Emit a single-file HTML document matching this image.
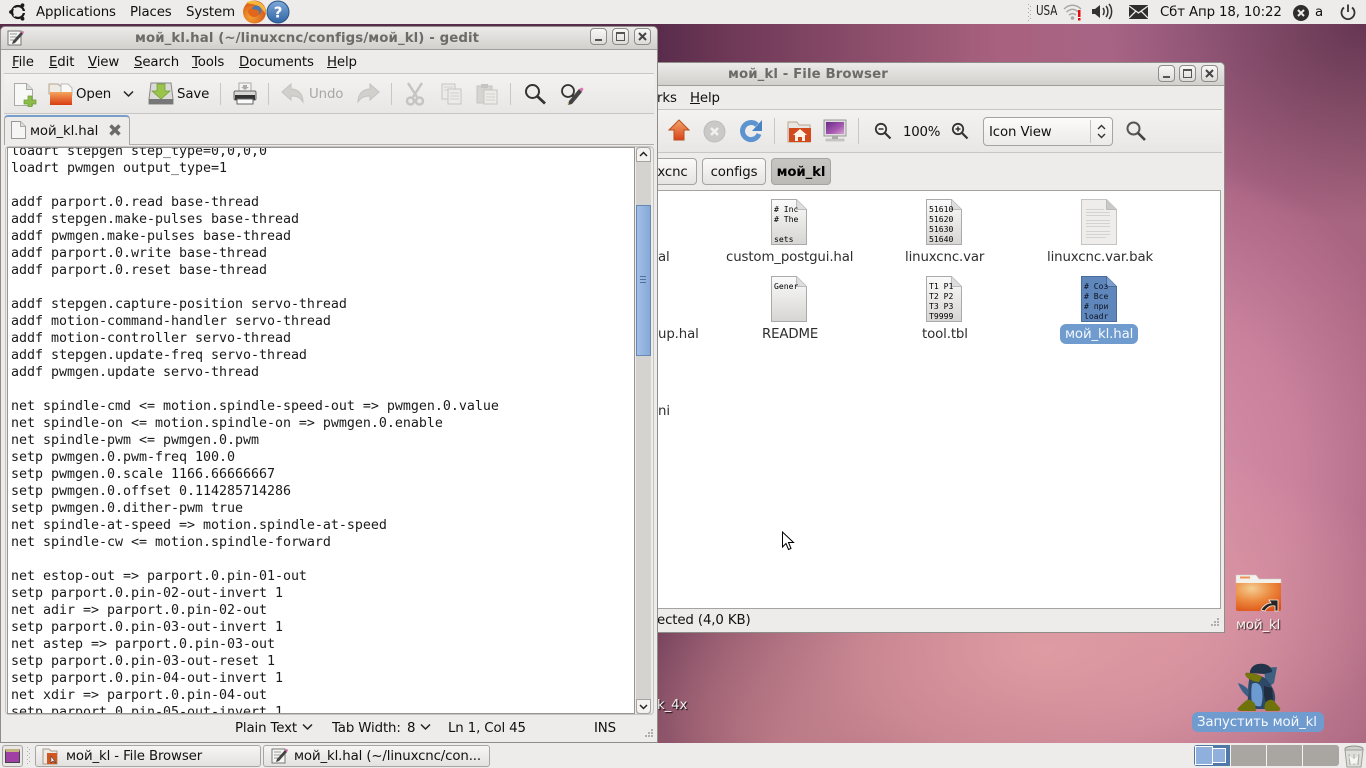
<!DOCTYPE html>
<html><head><meta charset="utf-8"><title>gedit</title>
<style>
html,body{margin:0;padding:0;width:1366px;height:768px;overflow:hidden}
body{position:relative;font-family:"DejaVu Sans","Liberation Sans","Noto Sans CJK SC",sans-serif;font-size:13.33px;letter-spacing:-.13px;color:#101010;
background:
radial-gradient(ellipse 260px 200px at 1366px 24px,#653652 0,rgba(101,54,82,0) 100%),
radial-gradient(ellipse 400px 230px at 1040px 650px,rgba(227,160,164,.9) 0,rgba(227,160,164,.6) 45%,rgba(227,160,164,0) 100%),
radial-gradient(ellipse 340px 200px at 790px 750px,rgba(176,112,126,.95) 0,rgba(176,112,126,0) 100%),
radial-gradient(ellipse 370px 450px at 1170px 470px,#d68fa9 0,#c9819c 35%,rgba(170,100,130,.7) 70%,rgba(150,85,115,0) 100%),
linear-gradient(90deg,#5a2c4c 660px,#6c3755 720px,#a8627f 1000px,#a8668a 1200px,#a5667d 1366px);}
.a{position:absolute}
.t{position:absolute;white-space:nowrap;line-height:16px}
u{text-decoration:underline}
.win{position:absolute;background:#edecea;border:1px solid #8f8d89;box-sizing:border-box;border-radius:5px 5px 0 0}
.title{position:absolute;background:linear-gradient(#ecebe9,#d2d0cd);border-bottom:1px solid #a09e9a;border-radius:4px 4px 0 0}
.ttxt{position:absolute;font-weight:bold;color:#6d6a67;white-space:nowrap;line-height:16px;letter-spacing:.09px}
.wb{position:absolute;width:17px;height:17px;box-sizing:border-box;border:1px solid #8e8c88;border-radius:4px;background:linear-gradient(#f8f8f7,#dddbd8)}
.sep{position:absolute;width:1px;background:#c9c7c3}
.hl{position:absolute;height:1px;background:#c8c6c2}
pre{position:absolute;margin:0;font-family:"DejaVu Sans Mono","Liberation Mono",monospace;font-size:13.33px;line-height:17px;letter-spacing:-.026px;color:#1a1a1a}
.icotxt{position:absolute;font-family:"DejaVu Sans Mono","Liberation Mono",monospace;font-size:8.1px;letter-spacing:0;line-height:10px;color:#000;white-space:pre}
.file{position:absolute;width:36px;height:46px}
.lbl{position:absolute;white-space:nowrap;line-height:16px;text-align:center;color:#2e2e2e;font-size:13.33px}
.crumb{position:absolute;box-sizing:border-box;height:27px;border:1px solid #a6a4a0;border-radius:4px;background:linear-gradient(#fafaf9,#e6e4e2);line-height:27px;text-align:center}
.tb{position:absolute;box-sizing:border-box;height:22px;border:1px solid #a8a6a2;border-radius:3px;background:linear-gradient(#f7f6f5,#e4e2df);line-height:21px;white-space:nowrap;overflow:hidden}
</style></head><body>

<!-- TOP PANEL -->
<div class="a" style="left:0;top:0;width:1366px;height:24px;background:#edecea"></div>
<svg class="a" style="left:8px;top:2px" width="20" height="20" viewBox="0 0 20 20"><circle cx="10" cy="10" r="6" fill="none" stroke="#1a1a1a" stroke-width="2.200"/><circle cx="3" cy="10" r="1.900" fill="#1a1a1a"/><circle cx="14.500" cy="3.300" r="1.900" fill="#1a1a1a"/><circle cx="14.500" cy="16.700" r="1.900" fill="#1a1a1a"/><path d="M6 6l2 3M6 14.500l2-3M13 10h4" stroke="#edecea" stroke-width="2"/></svg>
<div class="t" style="left:36px;top:5px">Applications</div>
<div class="t" style="left:130px;top:5px">Places</div>
<div class="t" style="left:186px;top:5px">System</div>
<svg class="a" style="left:242px;top:0" width="25" height="24" viewBox="0 0 25 24"><defs><radialGradient id="ffx" cx=".35" cy=".7" r=".8"><stop offset="0" stop-color="#f4a030"/><stop offset="1" stop-color="#cf4a14"/></radialGradient></defs><circle cx="12.500" cy="12" r="11.500" fill="url(#ffx)"/><path d="M4 3c5-4 15-3 19 5l1 6-6-7c-4-3-10-3-14-4z" fill="#f7b73c"/><circle cx="14.500" cy="10.500" r="5" fill="#4a77b0"/><path d="M9 8c2 2 6 1 8 3 1 3-1 6-5 6-3 0-5-2-6-5 0-2 1-3 3-4z" fill="#e0661c"/></svg>
<svg class="a" style="left:266px;top:0" width="24" height="24" viewBox="0 0 24 24"><defs><linearGradient id="hg" x1="0" y1="0" x2="0" y2="1"><stop offset="0" stop-color="#7fa9d8"/><stop offset="1" stop-color="#2f64a5"/></linearGradient></defs><circle cx="12" cy="12" r="11" fill="url(#hg)" stroke="#295487"/><text x="12" y="17.500" text-anchor="middle" font-family="DejaVu Sans" font-weight="bold" font-size="15" fill="#fff">?</text></svg>

<svg class="a" style="left:1028px;top:4px" width="4" height="17"><g fill="#aaa"><rect x="0" y="0" width="1" height="1"/><rect x="2" y="2" width="1" height="1"/><rect x="0" y="4" width="1" height="1"/><rect x="2" y="6" width="1" height="1"/><rect x="0" y="8" width="1" height="1"/><rect x="2" y="10" width="1" height="1"/><rect x="0" y="12" width="1" height="1"/><rect x="2" y="14" width="1" height="1"/><rect x="0" y="16" width="1" height="1"/></g></svg>
<div class="t" style="left:1036px;top:4px;font-size:13.33px;transform:scaleX(.78);transform-origin:0 0;color:#222">USA</div>
<svg class="a" style="left:1063px;top:3px" width="20" height="18" viewBox="0 0 20 18"><g fill="none" stroke="#a9a7a3" stroke-width="1.500"><path d="M1 6c5-5 12-5 17 0"/><path d="M3.500 9c4-3.500 8-3.500 12 0"/><path d="M6 12c2.500-2 4.500-2 7 0"/></g><circle cx="9.500" cy="15" r="1.800" fill="#a9a7a3"/><rect x="15" y="7" width="2.500" height="7" fill="#e01010"/><rect x="15" y="15" width="2.500" height="2.500" fill="#e01010"/></svg>
<svg class="a" style="left:1091px;top:2px" width="22" height="19" viewBox="0 0 22 19"><path d="M1 7h3l5-4v13l-5-4H1z" fill="#333"/><g fill="none" stroke="#333" stroke-width="1.500"><path d="M12 6c1.500 2 1.500 5 0 7"/><path d="M15 4c2.500 3 2.500 8 0 11"/><path d="M18 2c3.500 4 3.500 11 0 15"/></g></svg>
<svg class="a" style="left:1129px;top:5px" width="19" height="14" viewBox="0 0 19 14"><rect width="19" height="14" fill="#2e2e2e"/><path d="M0 1l9.500 7L19 1M0 13l7-7M19 13l-7-7" fill="none" stroke="#edecea" stroke-width="1.300"/></svg>
<div class="t" style="left:1160px;top:5px">Сбт Апр 18, 10:22</div>
<svg class="a" style="left:1292px;top:4px" width="18" height="18" viewBox="0 0 18 18"><circle cx="9" cy="9" r="8" fill="#2e2e2e"/><path d="M6 6l6 6M12 6l-6 6" stroke="#edecea" stroke-width="2"/></svg>
<div class="t" style="left:1315px;top:5px">а</div>
<svg class="a" style="left:1339px;top:3px" width="18" height="18" viewBox="0 0 18 18"><path d="M5 4.500a6.500 6.500 0 1 0 8 0" fill="none" stroke="#333" stroke-width="1.800"/><path d="M9 1.500v7.500" stroke="#333" stroke-width="1.800"/></svg>

<!-- FILE BROWSER WINDOW -->
<div class="win" style="left:600px;top:62px;width:625px;height:571px"></div>
<div class="title" style="left:601px;top:63px;width:623px;height:22px"></div>
<div class="ttxt" style="left:728px;top:67px">мой_kl - File Browser</div>
<div class="wb" style="left:1158px;top:65px"><div class="a" style="left:4px;top:10px;width:7px;height:2px;background:#555"></div></div>
<div class="wb" style="left:1179px;top:65px"><div class="a" style="left:3px;top:3px;width:7px;height:6px;border:1px solid #555;border-top-width:2px"></div></div>
<div class="wb" style="left:1201px;top:65px"><svg class="a" style="left:2px;top:2px" width="11" height="11"><path d="M2 2l7 7M9 2l-7 7" stroke="#444" stroke-width="2"/></svg></div>
<div class="t" style="left:657px;top:91px">rks</div>
<div class="t" style="left:690px;top:91px"><u>H</u>elp</div>
<div class="hl" style="left:601px;top:109px;width:621px"></div>
<div class="a" style="left:601px;top:110px;width:621px;height:42px;background:linear-gradient(#f3f2f1,#e9e7e5)"></div>
<div class="hl" style="left:601px;top:152px;width:621px"></div>
<svg class="a" style="left:668px;top:119px" width="22" height="22" viewBox="0 0 22 22"><defs><linearGradient id="up" x1="0" y1="0" x2="0" y2="1"><stop offset="0" stop-color="#f5a66a"/><stop offset="1" stop-color="#d8431a"/></linearGradient></defs><path d="M11 1l10 10h-5v10H6V11H1z" fill="url(#up)" stroke="#b5501f"/></svg>
<svg class="a" style="left:703px;top:120px" width="23" height="23" viewBox="0 0 23 23"><circle cx="11.500" cy="11.500" r="10.500" fill="#cbc9c6" stroke="#bbb"/><path d="M8 8l7 7M15 8l-7 7" stroke="#f2f1f0" stroke-width="2.500"/></svg>
<svg class="a" style="left:740px;top:119px" width="24" height="24" viewBox="0 0 24 24"><path d="M19 15a8.500 8.500 0 1 1-2-9" fill="none" stroke="#5d93cf" stroke-width="5"/><path d="M22 1v11H12z" fill="#4b84c4"/></svg>
<div class="sep" style="left:774px;top:118px;height:26px"></div>
<svg class="a" style="left:787px;top:120px" width="25" height="23" viewBox="0 0 25 23"><path d="M1 2h9l2 3h11v17H1z" fill="#e8e6e2" stroke="#b9a48f"/><path d="M2 8h22v14H2z" fill="#d2491c"/><path d="M13 9l7 6h-2v6h-3v-4h-4v4H8v-6H6z" fill="#fff3e8"/></svg>
<svg class="a" style="left:823px;top:119px" width="24" height="24" viewBox="0 0 24 24"><defs><linearGradient id="scr" x1="0" y1="0" x2="1" y2="1"><stop offset="0" stop-color="#6a2a86"/><stop offset=".6" stop-color="#a65ab0"/><stop offset="1" stop-color="#d8a0d0"/></linearGradient></defs><rect x="1" y="1" width="22" height="16" fill="#ddd" stroke="#999"/><rect x="3" y="3" width="18" height="12" fill="url(#scr)"/><rect x="9" y="17" width="6" height="3" fill="#aaa"/><rect x="3" y="20" width="18" height="2" fill="#cfcdc9" stroke="#aaa" stroke-width=".5"/></svg>
<div class="sep" style="left:858px;top:118px;height:26px"></div>
<svg class="a" style="left:874px;top:122px" width="18" height="18" viewBox="0 0 18 18"><circle cx="7" cy="7" r="5.200" fill="#f2f1f0" stroke="#333" stroke-width="1.800"/><path d="M11 11l5.500 5.500" stroke="#333" stroke-width="2.200"/><path d="M4.500 7h5" stroke="#333" stroke-width="1.500"/></svg>
<div class="t" style="left:903px;top:125px;letter-spacing:-.25px">100%</div>
<svg class="a" style="left:951px;top:122px" width="18" height="18" viewBox="0 0 18 18"><circle cx="7" cy="7" r="5.200" fill="#f2f1f0" stroke="#333" stroke-width="1.800"/><path d="M11 11l5.500 5.500" stroke="#333" stroke-width="2.200"/><path d="M4.500 7h5M7 4.500v5" stroke="#333" stroke-width="1.500"/></svg>
<div class="a" style="left:983px;top:117px;width:130px;height:29px;box-sizing:border-box;border:1px solid #a6a4a0;border-radius:4px;background:linear-gradient(#fbfbfa,#eceae8)"></div>
<div class="t" style="left:989px;top:125px">Icon View</div>
<div class="a" style="left:1090px;top:120px;width:1px;height:23px;background:#c4c2be"></div>
<svg class="a" style="left:1096px;top:124px" width="11" height="15" viewBox="0 0 11 15"><path d="M2 5l3.500-3.500L9 5M2 10l3.500 3.500L9 10" fill="none" stroke="#333" stroke-width="1.400"/></svg>
<svg class="a" style="left:1125px;top:120px" width="22" height="22" viewBox="0 0 22 22"><circle cx="8.500" cy="8.500" r="6" fill="none" stroke="#555" stroke-width="2"/><path d="M13 13l7 7" stroke="#444" stroke-width="2.600"/></svg>

<div class="crumb" style="left:620px;top:158px;width:77px;padding-left:28px">xcnc</div>
<div class="crumb" style="left:702px;top:158px;width:64px">configs</div>
<div class="crumb" style="left:771px;top:158px;width:60px;background:linear-gradient(#c8c6c3,#bcbab6);font-weight:bold;color:#000">мой_kl</div>

<div class="a" style="left:610px;top:190px;width:611px;height:419px;background:#fff;border:1px solid #a5a3a0;box-sizing:border-box"></div>

<!-- file icons -->
<svg width="0" height="0" style="position:absolute"><defs><linearGradient id="pg" x1="0" y1="0" x2="0" y2="1"><stop offset="0" stop-color="#fbfbfb"/><stop offset="1" stop-color="#d6d5d3"/></linearGradient></defs></svg>
<svg class="file" style="left:771px;top:199px" viewBox="0 0 36 46"><path d="M.5.500h25l10 10v35H.500z" fill="url(#pg)" stroke="#aaa"/><path d="M25.500.500v10h10" fill="#ddd" stroke="#bbb"/></svg>
<div class="icotxt" style="left:774px;top:204px"># Inc
# The

sets</div>
<svg class="file" style="left:926px;top:199px" viewBox="0 0 36 46"><path d="M.5.500h25l10 10v35H.500z" fill="url(#pg)" stroke="#aaa"/><path d="M25.500.500v10h10" fill="#ddd" stroke="#bbb"/></svg>
<div class="icotxt" style="left:929px;top:204px">51610
51620
51630
51640</div>
<svg class="file" style="left:1081px;top:199px" viewBox="0 0 36 46"><path d="M.5.500h25l10 10v35H.500z" fill="#eeedec" stroke="#c4c4c2"/><path d="M25.500.500v10h10" fill="#c8c8c6" stroke="#bbb"/><g stroke="#d2d2d0"><path d="M5 10.500h18M5 13.500h24M5 16.500h24M5 21.500h24M5 24.500h24M5 27.500h24M5 32.500h24M5 35.500h24M5 38.500h20"/></g></svg>
<svg class="file" style="left:771px;top:276px" viewBox="0 0 36 46"><path d="M.5.500h25l10 10v35H.500z" fill="url(#pg)" stroke="#aaa"/><path d="M25.500.500v10h10" fill="#ddd" stroke="#bbb"/></svg>
<div class="icotxt" style="left:774px;top:281px">Gener</div>
<svg class="file" style="left:926px;top:276px" viewBox="0 0 36 46"><path d="M.5.500h25l10 10v35H.500z" fill="url(#pg)" stroke="#aaa"/><path d="M25.500.500v10h10" fill="#ddd" stroke="#bbb"/></svg>
<div class="icotxt" style="left:929px;top:281px">T1 P1
T2 P2
T3 P3
T9999</div>
<svg class="file" style="left:1081px;top:276px" viewBox="0 0 36 46"><path d="M.5.500h25l10 10v35H.500z" fill="#5f87bc" stroke="#4a6c9a"/><path d="M25.500.500v10h10" fill="#7a9dcb" stroke="#4a6c9a"/></svg>
<div class="icotxt" style="left:1084px;top:281px;color:#0c1420"># Соз
# Все
# при
loadr</div>
<div class="lbl" style="left:658px;top:250px">al</div>
<div class="lbl" style="left:726px;top:250px">custom_postgui.hal</div>
<div class="lbl" style="left:905px;top:250px">linuxcnc.var</div>
<div class="lbl" style="left:1047px;top:250px">linuxcnc.var.bak</div>
<div class="lbl" style="left:658px;top:327px">up.hal</div>
<div class="lbl" style="left:762px;top:327px">README</div>
<div class="lbl" style="left:922px;top:327px">tool.tbl</div>
<div class="a" style="left:1060px;top:324px;width:78px;height:20px;background:#6f9bcf;border-radius:6px"></div>
<div class="lbl" style="left:1065px;top:327px;color:#f4f8fc">мой_kl.hal</div>
<div class="lbl" style="left:658px;top:404px">ni</div>
<div class="t" style="left:657px;top:613px">ected (4,0 KB)</div>
<svg class="a" style="left:1208px;top:617px" width="12" height="12"><g fill="#b0aeaa"><rect x="9" y="1" width="2" height="2"/><rect x="6" y="4" width="2" height="2"/><rect x="9" y="4" width="2" height="2"/><rect x="3" y="7" width="2" height="2"/><rect x="6" y="7" width="2" height="2"/><rect x="9" y="7" width="2" height="2"/></g></svg>
<!-- cursor -->
<svg class="a" style="left:781px;top:531px" width="14" height="21" viewBox="0 0 14 21"><path d="M1.500 1v15l3.500-3.500 2.500 6 2.500-1-2.500-6h5z" fill="#fff" stroke="#000"/></svg>

<!-- desktop -->
<div class="t" style="left:657px;top:698px;color:#f5eef0;text-shadow:1px 1px 1px #000">k_4x</div>
<svg class="a" style="left:1235px;top:574px" width="47" height="40" viewBox="0 0 47 40"><defs><radialGradient id="fo" cx=".35" cy=".2" r=".9"><stop offset="0" stop-color="#f4cd92"/><stop offset=".5" stop-color="#ec8a3e"/><stop offset="1" stop-color="#dc4f16"/></radialGradient></defs><path d="M1 1h20l3 4h22v6H1z" fill="#f3f1ec" stroke="#ccc" stroke-width=".5"/><path d="M1 9h45v26a2 2 0 0 1-2 2H3a2 2 0 0 1-2-2z" fill="url(#fo)"/><rect x="5" y="2.500" width="10" height="2" fill="#f0905a"/><path d="M26 36c2-4 6-7 10-7l-2-3h9v11h-3v-5c-4-1-8 1-10 5z" fill="#2a2422" stroke="#f6f2ee" stroke-width=".8"/></svg>
<div class="t" style="left:1236px;top:618px;color:#fdf5f0;text-shadow:1px 1px 1px #2a1a20">мой_kl</div>
<svg class="a" style="left:1235px;top:662px" width="48" height="50" viewBox="0 0 48 50"><path d="M29 6l13-1-3 16-8 6z" fill="#3d5f80"/><path d="M15 9c2-6 7-8 14-7 5 1 8 4 8 8l-8 2-14-1z" fill="#22344a"/><path d="M15 14c5-1 12-1 16 3 6 6 10 14 9 21 0 5-5 9-12 9H18c-5-1-6-6-5-12 0-7 0-14 2-21z" fill="#2e4868"/><path d="M17 22c3-2 7-1 9 3 2 5 2 13 0 19-2 1-7 0-9-3-1-6-1-13 0-19z" fill="#6b9bd0"/><path d="M29 24l8 2 1 12-6 6-3-10z" fill="#1f2d3f"/><path d="M3 21c4 1 8 4 11 7l-1 7c-4-3-8-8-10-14z" fill="#3c5f87"/><path d="M11 11c5 0 11 1 16 4l-3 5c-5 0-9-2-12-5-1-1-2-3-1-4z" fill="#76780c" stroke="#5a5b0a" stroke-width=".5"/><path d="M12 38c3-1 6 1 8 4l1 7H5c-3-1-3-2-2-3 3-3 6-6 9-8zM31 40c3-3 6-3 8-1l6 7c1 2-1 3-3 3H31c-2-2-2-6 0-9z" fill="#70720c"/></svg>
<div class="a" style="left:1192px;top:712px;width:132px;height:20px;background:#6f9bcf;border-radius:6px"></div>
<div class="t" style="left:1197px;top:715px;color:#f4f8fc">Запустить мой_kl</div>

<!-- GEDIT WINDOW -->
<div class="win" style="left:0;top:26px;width:658px;height:717px"></div>
<div class="title" style="left:1px;top:27px;width:656px;height:22px"></div>
<svg class="a" style="left:7px;top:30px" width="17" height="16" viewBox="0 0 17 16"><rect x="1" y="1" width="13" height="14" fill="#f5f5f3" stroke="#777"/><path d="M3 4h7M3 7h7M3 10h5" stroke="#999"/><path d="M6 11L14 2l2 2-8 9-3 1z" fill="#444"/><path d="M14 2l2 2 1-2-1-1z" fill="#e060a0"/></svg>
<div class="ttxt" style="left:135px;top:31px">мой_kl.hal (~/linuxcnc/configs/мой_kl) - gedit</div>
<div class="wb" style="left:590px;top:28px"><div class="a" style="left:4px;top:10px;width:7px;height:2px;background:#555"></div></div>
<div class="wb" style="left:612px;top:28px"><div class="a" style="left:3px;top:3px;width:7px;height:6px;border:1px solid #555;border-top-width:2px"></div></div>
<div class="wb" style="left:634px;top:28px"><svg class="a" style="left:2px;top:2px" width="11" height="11"><path d="M2 2l7 7M9 2l-7 7" stroke="#444" stroke-width="2"/></svg></div>
<div class="t" style="left:12px;top:55px"><u>F</u>ile</div>
<div class="t" style="left:49px;top:55px"><u>E</u>dit</div>
<div class="t" style="left:88px;top:55px"><u>V</u>iew</div>
<div class="t" style="left:134px;top:55px"><u>S</u>earch</div>
<div class="t" style="left:192px;top:55px"><u>T</u>ools</div>
<div class="t" style="left:239px;top:55px"><u>D</u>ocuments</div>
<div class="t" style="left:327px;top:55px"><u>H</u>elp</div>
<div class="hl" style="left:4px;top:73px;width:650px"></div>
<div class="a" style="left:4px;top:74px;width:650px;height:39px;background:linear-gradient(#f3f2f1,#e9e7e5)"></div>
<div class="hl" style="left:4px;top:113px;width:650px"></div>
<svg class="a" style="left:13px;top:82px" width="24" height="25" viewBox="0 0 24 25"><path d="M1.500 1.500h12l6 6v16h-18z" fill="#f8f8f6" stroke="#aaa"/><path d="M13.500 1.500v6h6" fill="#ddd" stroke="#aaa"/><path d="M15 14h4v4h4v4h-4v3h-4v-3h-4v-4h4z" fill="#8cbd4a" stroke="#6d9a35" stroke-width=".7"/></svg>
<svg class="a" style="left:48px;top:83px" width="25" height="23" viewBox="0 0 25 23"><defs><linearGradient id="of" x1="0" y1="0" x2="0" y2="1"><stop offset="0" stop-color="#f4a45e"/><stop offset="1" stop-color="#d93a10"/></linearGradient></defs><path d="M1 1h9l2 2h8v8H1z" fill="#eeeae4" stroke="#b9a48f"/><path d="M13 1h7l4 4v7H13z" fill="#f8f8f6" stroke="#bbb"/><rect x="2" y="9" width="22" height="13" fill="url(#of)"/></svg>
<div class="t" style="left:76px;top:87px">Open</div>
<svg class="a" style="left:123px;top:90px" width="11" height="8"><path d="M1 1.500l4.500 4.500L10 1.500" fill="none" stroke="#222" stroke-width="1.500"/></svg>
<svg class="a" style="left:148px;top:81px" width="26" height="25" viewBox="0 0 26 25"><path d="M3 2h20l2 16v5H1v-5z" fill="#dcdbd8" stroke="#888"/><rect x="1" y="18" width="24" height="5" fill="#777"/><path d="M9 3h8v7h5l-9 8-9-8h5z" fill="#9ac54a" stroke="#6d9a35" stroke-width=".7"/></svg>
<div class="t" style="left:177px;top:87px">Save</div>
<div class="sep" style="left:220px;top:83px;height:22px"></div>
<svg class="a" style="left:233px;top:82px" width="24" height="24" viewBox="0 0 24 24"><rect x="6" y="1" width="12" height="9" fill="#f2f2f0" stroke="#aaa"/><path d="M10 3h4v2h2l-4 3-4-3h2z" fill="#aaa"/><rect x="1" y="9" width="22" height="9" rx="1.500" fill="#d8d7d4" stroke="#666"/><rect x="2" y="13" width="20" height="5" fill="#333"/><rect x="4" y="17" width="16" height="5" fill="#fafafa" stroke="#666"/></svg>
<div class="sep" style="left:268px;top:83px;height:22px"></div>
<svg class="a" style="left:281px;top:83px" width="23" height="22" viewBox="0 0 23 22"><path d="M1 9l9-8v5c7 0 12 5 12 13-3-5-7-6-12-6v4z" fill="#d2d0cd" stroke="#c4c2bf"/></svg>
<div class="t" style="left:309px;top:87px;color:#a9a7a4">Undo</div>
<svg class="a" style="left:357px;top:83px" width="23" height="22" viewBox="0 0 23 22"><path d="M22 9l-9-8v5C6 6 1 11 1 19c3-5 7-6 12-6v4z" fill="#d2d0cd" stroke="#c4c2bf"/></svg>
<div class="sep" style="left:391px;top:83px;height:22px"></div>
<svg class="a" style="left:405px;top:82px" width="20" height="24" viewBox="0 0 20 24"><path d="M3 1l9 14M17 1L8 15" stroke="#c6c4c1" stroke-width="2.500"/><circle cx="5.500" cy="19" r="3.500" fill="none" stroke="#c6c4c1" stroke-width="2.500"/><circle cx="14.500" cy="19" r="3.500" fill="none" stroke="#c6c4c1" stroke-width="2.500"/></svg>
<svg class="a" style="left:441px;top:83px" width="21" height="22" viewBox="0 0 21 22"><rect x="1" y="1" width="13" height="15" fill="#ecebe9" stroke="#c6c4c1"/><path d="M3 4h9M3 7h9" stroke="#d2d0cd"/><rect x="7" y="6" width="13" height="15" fill="#ecebe9" stroke="#c6c4c1"/><path d="M9 10h9M9 13h9M9 16h9" stroke="#d2d0cd"/></svg>
<svg class="a" style="left:476px;top:83px" width="22" height="22" viewBox="0 0 22 22"><rect x="1" y="3" width="15" height="17" fill="#d6d4d1" stroke="#c6c4c1"/><rect x="5" y="1" width="7" height="4" fill="#c6c4c1"/><rect x="8" y="7" width="13" height="14" fill="#ecebe9" stroke="#c6c4c1"/><path d="M10 11h9M10 14h9M10 17h9" stroke="#d2d0cd"/></svg>
<div class="sep" style="left:510px;top:83px;height:22px"></div>
<svg class="a" style="left:524px;top:83px" width="23" height="22" viewBox="0 0 23 22"><circle cx="8.500" cy="8.500" r="6.500" fill="none" stroke="#333" stroke-width="2"/><path d="M13.500 13.500l7.500 7" stroke="#333" stroke-width="2.800"/></svg>
<svg class="a" style="left:560px;top:83px" width="24" height="23" viewBox="0 0 24 23"><circle cx="8" cy="8" r="6" fill="none" stroke="#333" stroke-width="1.800"/><path d="M12 12l4 4" stroke="#333" stroke-width="2.500"/><path d="M9 18L19 6l3 3-10 12-4 1z" fill="#444"/><path d="M19 6l3 3 1.500-3-1.500-1.500z" fill="#e070b0"/><path d="M8 19l1 2-2 1z" fill="#e8d870"/></svg>

<!-- tabs -->
<div class="a" style="left:4px;top:144px;width:650px;height:1px;background:#b1afab"></div>
<div class="a" style="left:4px;top:115px;width:126px;height:30px;box-sizing:border-box;background:#edecea;border:1px solid #a8a6a2;border-top:2px solid #7a9ecb;border-bottom:none;border-radius:4px 4px 0 0"></div>
<svg class="a" style="left:11px;top:121px" width="15" height="18" viewBox="0 0 15 18"><path d="M.5.500h9l5 5v12H.500z" fill="#f5f5f4" stroke="#999"/><path d="M9.500.500v5h5" fill="#ddd" stroke="#aaa"/></svg>
<div class="t" style="left:30px;top:124px">мой_kl.hal</div>
<svg class="a" style="left:108px;top:123px" width="14" height="14"><path d="M2.500 2.500l9 9M11.500 2.500l-9 9" stroke="#6c6a67" stroke-width="3.500"/></svg>

<!-- editor -->
<div class="a" style="left:5px;top:146px;width:649px;height:569px;box-sizing:border-box;border:1px solid #c6c4c0;border-radius:4px"></div>
<div class="a" style="left:7px;top:147px;width:628px;height:567px;box-sizing:border-box;background:#fff;border:1px solid #979592;overflow:hidden">
<pre style="left:3px;top:-5px">loadrt stepgen step_type=0,0,0,0
loadrt pwmgen output_type=1

addf parport.0.read base-thread
addf stepgen.make-pulses base-thread
addf pwmgen.make-pulses base-thread
addf parport.0.write base-thread
addf parport.0.reset base-thread

addf stepgen.capture-position servo-thread
addf motion-command-handler servo-thread
addf motion-controller servo-thread
addf stepgen.update-freq servo-thread
addf pwmgen.update servo-thread

net spindle-cmd &lt;= motion.spindle-speed-out =&gt; pwmgen.0.value
net spindle-on &lt;= motion.spindle-on =&gt; pwmgen.0.enable
net spindle-pwm &lt;= pwmgen.0.pwm
setp pwmgen.0.pwm-freq 100.0
setp pwmgen.0.scale 1166.66666667
setp pwmgen.0.offset 0.114285714286
setp pwmgen.0.dither-pwm true
net spindle-at-speed =&gt; motion.spindle-at-speed
net spindle-cw &lt;= motion.spindle-forward

net estop-out =&gt; parport.0.pin-01-out
setp parport.0.pin-02-out-invert 1
net adir =&gt; parport.0.pin-02-out
setp parport.0.pin-03-out-invert 1
net astep =&gt; parport.0.pin-03-out
setp parport.0.pin-03-out-reset 1
setp parport.0.pin-04-out-invert 1
net xdir =&gt; parport.0.pin-04-out
setp parport.0.pin-05-out-invert 1</pre>
</div>
<!-- scrollbar -->
<div class="a" style="left:636px;top:147px;width:15px;height:567px;background:#d5d3d0"></div>
<div class="a" style="left:636px;top:147px;width:15px;height:15px;box-sizing:border-box;border:1px solid #a6a4a0;border-radius:4px 4px 0 0;background:#f3f2f1"></div>
<svg class="a" style="left:639px;top:151px" width="9" height="6"><path d="M1 5l3.500-3.500L8 5" fill="none" stroke="#222" stroke-width="1.500"/></svg>
<div class="a" style="left:636px;top:205px;width:15px;height:151px;box-sizing:border-box;border:1px solid #6688b3;background:linear-gradient(90deg,#a2c0e6,#86a9d8)"></div>
<div class="a" style="left:640px;top:276px;width:6px;height:1px;background:#4f71a0;box-shadow:0 3px #4f71a0,0 6px #4f71a0"></div>
<div class="a" style="left:636px;top:699px;width:15px;height:15px;box-sizing:border-box;border:1px solid #a6a4a0;border-radius:0 0 4px 4px;background:#f3f2f1"></div>
<svg class="a" style="left:639px;top:704px" width="9" height="6"><path d="M1 1l3.500 3.500L8 1" fill="none" stroke="#222" stroke-width="1.500"/></svg>
<!-- status -->
<div class="t" style="left:235px;top:721px">Plain Text</div>
<svg class="a" style="left:302px;top:723px" width="11" height="8"><path d="M1 1.500l4.500 4.500L10 1.500" fill="none" stroke="#222" stroke-width="1.500"/></svg>
<div class="t" style="left:332px;top:721px">Tab Width:</div>
<div class="t" style="left:407px;top:721px">8</div>
<svg class="a" style="left:420px;top:723px" width="11" height="8"><path d="M1 1.500l4.500 4.500L10 1.500" fill="none" stroke="#222" stroke-width="1.500"/></svg>
<div class="t" style="left:448px;top:721px">Ln 1, Col 45</div>
<div class="t" style="left:594px;top:721px">INS</div>
<svg class="a" style="left:642px;top:728px" width="12" height="12"><g fill="#b0aeaa"><rect x="9" y="1" width="2" height="2"/><rect x="6" y="4" width="2" height="2"/><rect x="9" y="4" width="2" height="2"/><rect x="3" y="7" width="2" height="2"/><rect x="6" y="7" width="2" height="2"/><rect x="9" y="7" width="2" height="2"/></g></svg>

<!-- BOTTOM PANEL -->
<div class="a" style="left:0;top:743px;width:1366px;height:25px;background:#edecea"></div>
<div class="a" style="left:2px;top:745px;width:21px;height:22px;box-sizing:border-box;border:1px solid #a8a6a2;border-radius:3px;background:#e9e7e5"></div>
<div class="a" style="left:5px;top:749px;width:15px;height:14px;background:#a03fa6;border:1px solid #444;box-sizing:border-box;border-top:3px solid #c4b27f"></div>
<svg class="a" style="left:27px;top:746px" width="4" height="20"><g fill="#b0aeaa"><rect x="0" y="1" width="1" height="1"/><rect x="2" y="3" width="1" height="1"/><rect x="0" y="5" width="1" height="1"/><rect x="2" y="7" width="1" height="1"/><rect x="0" y="9" width="1" height="1"/><rect x="2" y="11" width="1" height="1"/><rect x="0" y="13" width="1" height="1"/><rect x="2" y="15" width="1" height="1"/><rect x="0" y="17" width="1" height="1"/></g></svg>
<div class="tb" style="left:35px;top:745px;width:226px;padding-left:30px">мой_kl - File Browser</div>
<svg class="a" style="left:42px;top:748px" width="17" height="17" viewBox="0 0 17 17"><path d="M1 1h6l2 2h6v13H1z" fill="#eceae6" stroke="#a89a8a"/><path d="M5 5h10v11H5z" fill="#d2561e"/><path d="M9 8v7l2-2 3 2z" fill="#fff" stroke="#444" stroke-width=".6"/></svg>
<div class="tb" style="left:263px;top:745px;width:227px;padding-left:30px">мой_kl.hal (~/linuxcnc/con...</div>
<svg class="a" style="left:271px;top:748px" width="17" height="16" viewBox="0 0 17 16"><rect x="1" y="1" width="13" height="14" fill="#f5f5f3" stroke="#777"/><path d="M3 4h7M3 7h7M3 10h5" stroke="#999"/><path d="M6 11L14 2l2 2-8 9-3 1z" fill="#444"/><path d="M14 2l2 2 1-2-1-1z" fill="#e060a0"/></svg>

<div class="a" style="left:1194px;top:745px;width:145px;height:21px;background:#a9a5a0;border-radius:3px"></div>
<div class="a" style="left:1194px;top:745px;width:36px;height:21px;background:#4f77a8;border-radius:3px 0 0 3px"></div>
<div class="a" style="left:1195px;top:746px;width:18px;height:19px;box-sizing:border-box;background:#8fb0dc;border:1px solid #fff"></div>
<div class="a" style="left:1212px;top:748px;width:14px;height:15px;box-sizing:border-box;background:#8fb0dc;border:1px solid #fff"></div>
<div class="a" style="left:1230px;top:745px;width:1px;height:21px;background:#f3f2f1"></div>
<div class="a" style="left:1266px;top:745px;width:1px;height:21px;background:#f3f2f1"></div>
<div class="a" style="left:1302px;top:745px;width:1px;height:21px;background:#f3f2f1"></div>
<svg class="a" style="left:1343px;top:745px" width="22" height="23" viewBox="0 0 22 23"><ellipse cx="11" cy="4" rx="9" ry="3" fill="#cfcfcb" stroke="#8f8f8b"/><path d="M2 5l2 17h14l2-17z" fill="#dededa" stroke="#9f9f9b"/><path d="M6 9l1 11M11 9v11M16 9l-1 11" stroke="#a9a9a5"/><path d="M6 11l5 3 4-3-1 7-6 1z" fill="#f6f6f4"/></svg>
</body></html>
